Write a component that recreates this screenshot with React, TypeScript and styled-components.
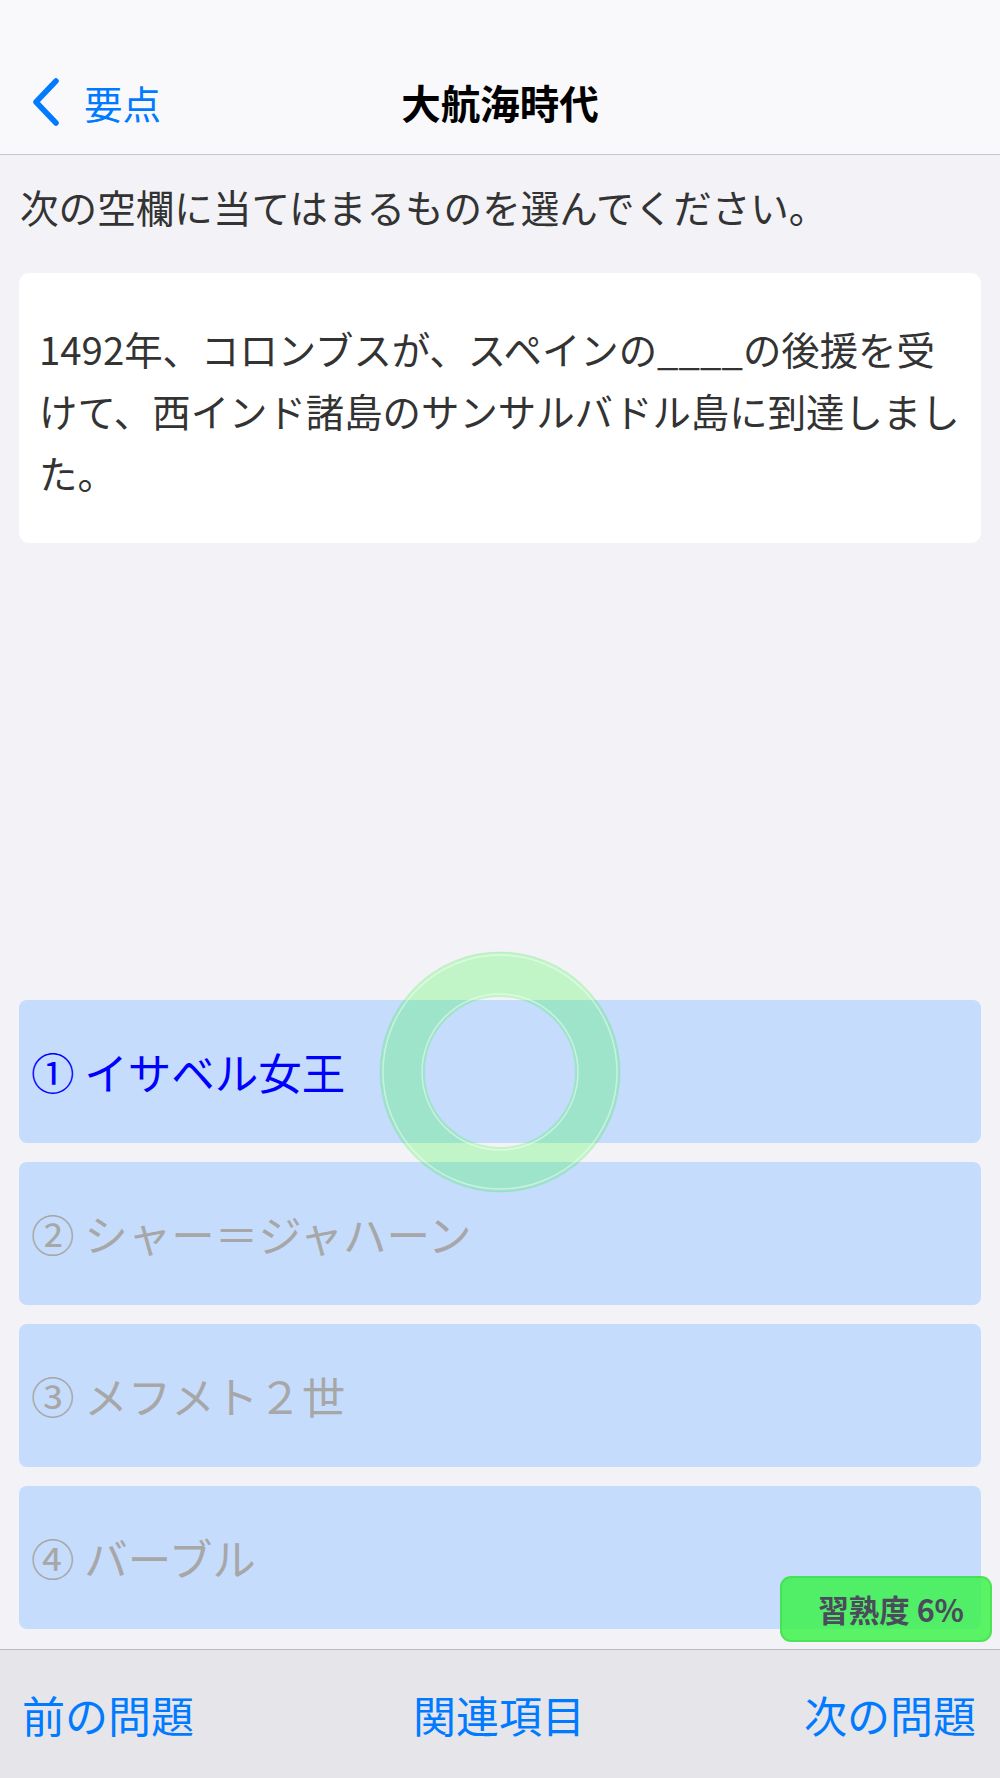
import React from "react";
import styled, { createGlobalStyle } from "styled-components";

const GlobalStyle = createGlobalStyle`
  html, body { margin: 0; padding: 0; }
  body {
    font-family: "Noto Sans CJK JP", "Noto Sans", sans-serif;
    background: #f2f2f7;
  }
  * { box-sizing: border-box; }
`;

const Page = styled.div`
  position: relative;
  width: 1000px;
  height: 1778px;
  display: flex;
  flex-direction: column;
  background: #f2f2f7;
  overflow: hidden;
`;

const NavBar = styled.header`
  height: 155px;
  padding-top: 50px;
  background: #f9f9fb;
  border-bottom: 1px solid #c6c6c8;
  display: grid;
  grid-template-columns: 1fr auto 1fr;
  align-items: center;
`;

const BackButton = styled.div`
  display: flex;
  align-items: center;
  gap: 25px;
  padding-left: 31px;
  color: #007aff;
  font-size: 38.5px;
  line-height: 1;
`;

const Title = styled.h1`
  margin: 0;
  font-size: 39.5px;
  font-weight: 700;
  color: #000;
  line-height: 1;
`;

const Main = styled.main`
  flex: 1;
  display: flex;
  flex-direction: column;
  padding: 0 19px 20px;
`;

const Prompt = styled.p`
  margin: 0;
  padding: 20px 1px 0;
  font-size: 38.6px;
  line-height: 62px;
  color: #333333;
`;

const QuestionCard = styled.div`
  margin-top: 36px;
  background: #ffffff;
  border-radius: 10px;
  padding: 44px 12px 40px 20px;
  font-size: 38.4px;
  line-height: 62px;
  color: #333333;
`;

const Options = styled.div`
  margin-top: auto;
  display: flex;
  flex-direction: column;
  gap: 19px;
`;

const Option = styled.div<{ $active?: boolean }>`
  height: 143px;
  display: flex;
  align-items: center;
  padding-left: 12px;
  background: #c5dcfc;
  border-radius: 8px;
  font-size: 43.5px;
  color: ${(p) => (p.$active ? "#0000ff" : "#a7a7a7")};
`;

const Toolbar = styled.footer`
  height: 129px;
  background: #e5e5ea;
  border-top: 1px solid #b8b8bc;
  display: flex;
  align-items: center;
  justify-content: space-between;
  padding: 0 24px 0 22px;
`;

const ToolButton = styled.span`
  font-size: 43px;
  color: #007aff;
  line-height: 1;
`;

const TouchRing = styled.svg`
  position: absolute;
  left: 379px;
  top: 951px;
  width: 242px;
  height: 242px;
  pointer-events: none;
`;

const MasteryBadge = styled.div`
  position: absolute;
  right: 8px;
  bottom: 136px;
  width: 212px;
  height: 66px;
  display: flex;
  align-items: center;
  justify-content: flex-end;
  padding-right: 26px;
  background: rgba(45, 243, 58, 0.77);
  border: 2px solid rgba(60, 215, 70, 0.55);
  border-radius: 11px;
  font-size: 30.5px;
  font-weight: 700;
  color: #4b4b5b;
`;

const options = [
  { label: "① イサベル女王", active: true },
  { label: "② シャー＝ジャハーン", active: false },
  { label: "③ メフメト２世", active: false },
  { label: "④ バーブル", active: false },
];

export default function App() {
  return (
    <Page>
      <GlobalStyle />
      <NavBar>
        <BackButton>
          <svg width="28" height="48" viewBox="0 0 28 48" aria-hidden>
            <path
              d="M25 3 L5 24 L25 45"
              fill="none"
              stroke="#007aff"
              strokeWidth="5.5"
              strokeLinecap="round"
              strokeLinejoin="round"
            />
          </svg>
          <span>要点</span>
        </BackButton>
        <Title>大航海時代</Title>
        <div />
      </NavBar>
      <Main>
        <Prompt>次の空欄に当てはまるものを選んでください。</Prompt>
        <QuestionCard>
          1492年、コロンブスが、スペインの____の後援を受けて、西インド諸島のサンサルバドル島に到達しました。
        </QuestionCard>
        <Options>
          {options.map((o) => (
            <Option key={o.label} $active={o.active}>
              {o.label}
            </Option>
          ))}
        </Options>
      </Main>
      <Toolbar>
        <ToolButton>前の問題</ToolButton>
        <ToolButton>関連項目</ToolButton>
        <ToolButton>次の問題</ToolButton>
      </Toolbar>
      <TouchRing viewBox="0 0 242 242">
        <circle cx="121" cy="121" r="97.5" fill="none" stroke="rgba(30,255,40,0.23)" strokeWidth="45" />
        <circle cx="121" cy="121" r="117" fill="none" stroke="rgba(255,255,255,0.45)" strokeWidth="1.5" />
        <circle cx="121" cy="121" r="78" fill="none" stroke="rgba(255,255,255,0.45)" strokeWidth="1.5" />
        <circle cx="121" cy="121" r="120" fill="none" stroke="rgba(60,200,80,0.15)" strokeWidth="1" />
      </TouchRing>
      <MasteryBadge>習熟度 6%</MasteryBadge>
    </Page>
  );
}
